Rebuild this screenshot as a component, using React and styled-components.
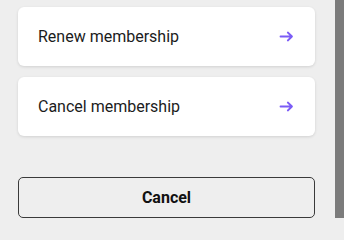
import React from 'react'
import styled, { createGlobalStyle } from 'styled-components'

const GlobalStyle = createGlobalStyle`
	html, body {
		margin: 0;
		padding: 0;
		background: #eeeeee;
		font-family: Roboto, 'Liberation Sans', sans-serif;
	}
`

const Screen = styled.div`
	display: flex;
	height: 218px;
	overflow: hidden;
	background: #eeeeee;
`

const Content = styled.div`
	flex: 1;
	display: flex;
	flex-direction: column;
	padding: 7px 20px 0 18px;
`

const Options = styled.ul`
	list-style: none;
	margin: 0;
	padding: 0;
	display: flex;
	flex-direction: column;
	gap: 11px;
`

const OptionCard = styled.li`
	height: 59px;
	box-sizing: border-box;
	padding: 0 21px 0 20px;
	display: flex;
	align-items: center;
	justify-content: space-between;
	background: #ffffff;
	border-radius: 6px;
	box-shadow: 0 1px 3px rgba(0, 0, 0, 0.12);
	font-size: 16px;
	color: #1c1c1c;
	cursor: pointer;
`

const CancelButton = styled.button`
	flex-shrink: 0;
	margin-top: 41px;
	height: 41px;
	width: 100%;
	border: 1px solid #3a3a3a;
	border-radius: 5px;
	background: transparent;
	font-family: Roboto, 'Liberation Sans', sans-serif;
	font-size: 16px;
	font-weight: 700;
	color: #111111;
	padding: 0;
`

const Scrollbar = styled.div`
	width: 9px;
	background: #7b7b7b;
`

const Arrow = () => (
	<svg width="15" height="11" viewBox="0 0 15 11" fill="none">
		<path
			d="M1.5 5.5h11.5M8.8 1.5l4.2 4-4.2 4"
			stroke="#7b5cf6"
			strokeWidth="1.8"
			strokeLinecap="round"
			strokeLinejoin="round"
		/>
	</svg>
)

const options = ['Renew membership', 'Cancel membership']

export default function App() {
	return (
		<>
			<GlobalStyle />
			<Screen>
				<Content>
					<Options>
						{options.map((label) => (
							<OptionCard key={label}>
								<span>{label}</span>
								<Arrow />
							</OptionCard>
						))}
					</Options>
					<CancelButton>Cancel</CancelButton>
				</Content>
				<Scrollbar />
			</Screen>
		</>
	)
}
